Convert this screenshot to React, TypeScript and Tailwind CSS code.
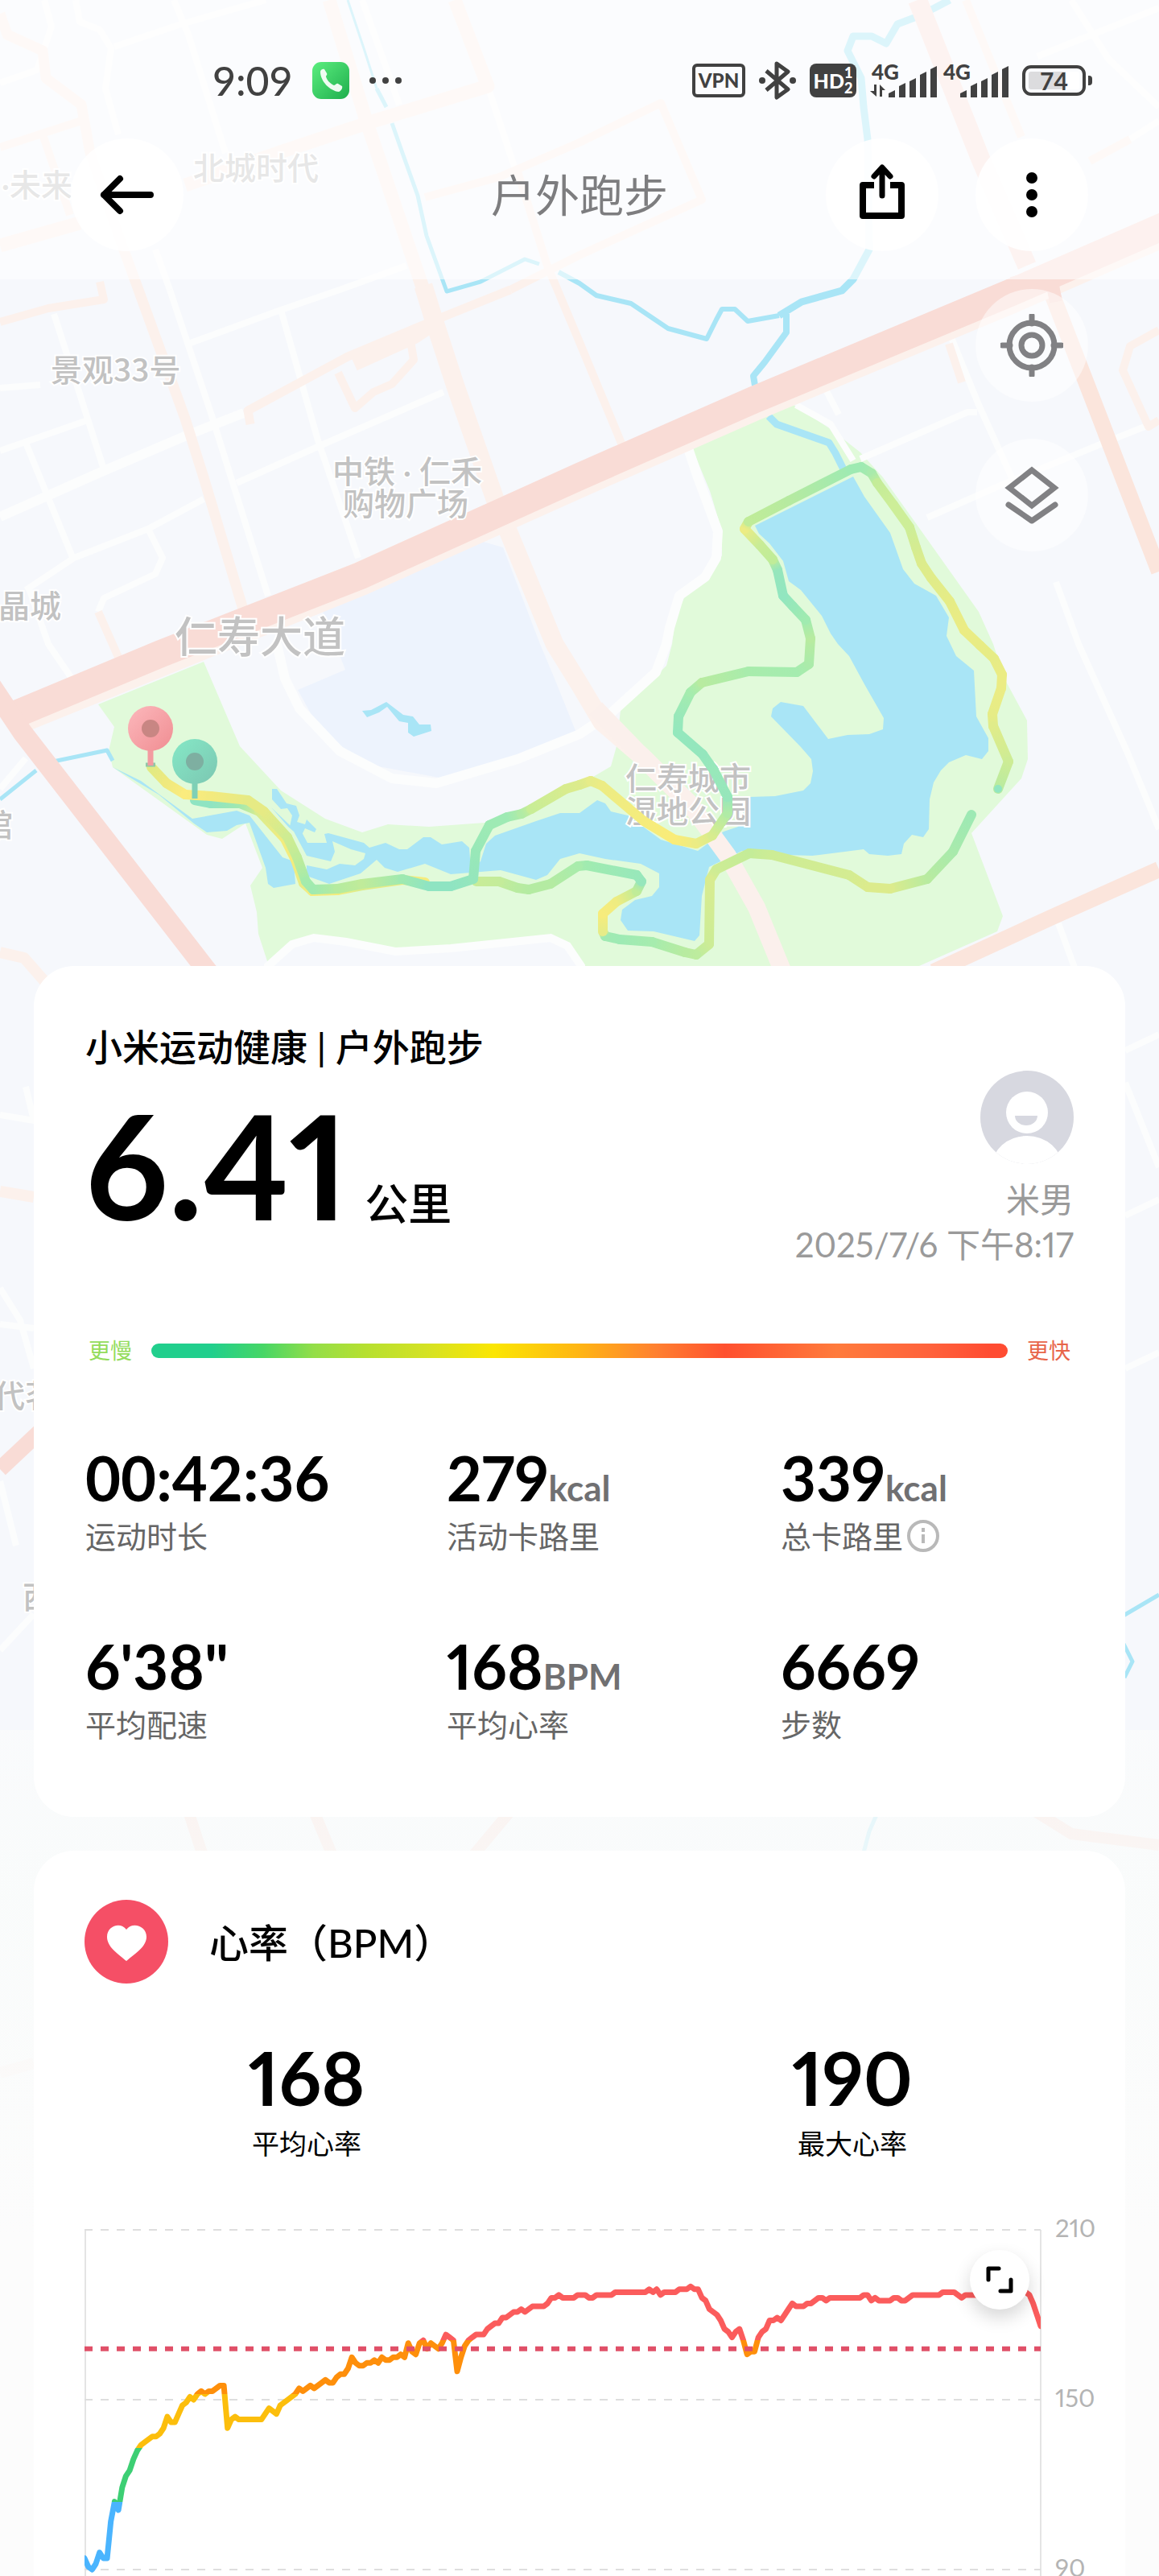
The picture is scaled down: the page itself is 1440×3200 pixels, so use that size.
import React from 'react';
import clsx from 'clsx';

interface TrackPoint {
  x: number;
  y: number;
  color: string;
}

interface StatProps {
  value: string;
  unit?: string;
  label: string;
  info?: boolean;
  clock?: boolean;
}

// one sample every 10 seconds
const heartRate = [
  94, 91, 90, 92, 96, 94, 94, 107, 114, 111, 119, 123, 125, 129, 132, 134, 135, 136, 137, 137,
  138, 140, 144, 142, 142, 145, 148, 149, 151, 150, 152, 153, 152, 153, 153, 154, 155, 155, 140, 143,
  144, 143, 143, 143, 143, 143, 143, 143, 145, 147, 146, 145, 148, 149, 150, 151, 152, 154, 153, 154,
  155, 154, 155, 156, 157, 156, 156, 158, 159, 159, 161, 165, 163, 162, 162, 163, 163, 164, 163, 165,
  164, 164, 165, 165, 166, 165, 170, 167, 166, 170, 171, 168, 170, 169, 168, 170, 173, 172, 171, 160,
  165, 169, 171, 172, 173, 173, 173, 175, 176, 177, 177, 179, 179, 180, 181, 181, 182, 181, 182, 183,
  183, 183, 183, 184, 186, 186, 187, 186, 186, 186, 186, 187, 187, 187, 186, 186, 187, 187, 187, 187,
  187, 188, 188, 188, 188, 188, 188, 188, 188, 188, 189, 188, 189, 187, 188, 188, 188, 188, 189, 189,
  189, 190, 189, 189, 186, 185, 182, 181, 180, 178, 175, 174, 172, 174, 175, 171, 166, 167, 167, 172,
  174, 175, 178, 178, 179, 178, 180, 182, 184, 183, 183, 183, 184, 184, 185, 186, 186, 185, 186, 186,
  186, 186, 186, 186, 186, 186, 186, 187, 187, 185, 186, 185, 185, 185, 185, 186, 186, 185, 185, 186,
  187, 187, 187, 187, 187, 187, 187, 187, 188, 188, 188, 188, 187, 186, 187, 187, 187, 187, 187, 187,
  187, 187, 187, 187, 187, 187, 187, 187, 187, 188, 188, 187, 184, 180, 176,
];

const toTrack = (data: string): TrackPoint[] =>
  data.trim().split(/\s+/).map((item) => {
    const [x, y, color] = item.split(',');
    return { x: Number(x), y: Number(y), color: `#${color}` };
  });

const trackUnder = toTrack(`
  242,994,8fe4c2 262,998,8fe4c2 298,998,a0e8b0 322,1008,d9ec8e 354,1042,f2ec7e 367,1068,f5ec7c
  377,1097,e6ec88 388,1107,f5ec7c 419,1106,f5ec7c 450,1100,d9ec8e 500,1093,f5ec7c 528,1096,f5ec7c
`);

const trackLower = toTrack(`
  1207,1012,9de9b4 1184,1058,a8eaac 1152,1092,b8eba0 1106,1104,dceb8c 1078,1102,dceb8c
  1055,1087,d4ec92 959,1062,cdec95 931,1060,c4ec98 890,1080,cdec95 882,1093,d8ec90
  881,1173,ccec96 865,1186,bdec9e 851,1183,b8eba0 810,1170,a6ecae 770,1167,9eeab4
  752,1163,a0eab2 749,1157,e6ec88 749,1135,f7ec7c 766,1120,efec80 791,1107,c0ec98
  797,1095,96e6bc 791,1087,98e8ba 729,1075,a0ebb0 718,1076,a8ecac 684,1098,b4eba2
  657,1105,b4eba2 643,1103,b8eba0 620,1095,c4ec9a 592,1095,c8ec98
`);

const trackMain = toTrack(`
  188,953,e0ea84 207,973,efe97e 230,987,fbec7e 262,989,f3ea7e 308,994,e6ea84 328,1008,e6ea84
  357,1040,cfec92 369,1065,c0ec98 380,1095,a4ebac 389,1105,a0eab0 420,1104,b5eb9f 450,1098,c0eb9a
  500,1092,9fe9b0 533,1101,8fe4c2 560,1101,8fe4c2 588,1092,95e6bc 591,1057,98e8b8 608,1025,9eeab4
  630,1015,9eeab4 648,1011,b0eba6 660,1005,c8ed96 703,980,d8ec8e 720,975,dceb8c 734,970,e6ec88
  748,976,ecec84 800,1020,f5ec7c 838,1043,faec78 865,1048,ecec84 885,1038,d8ec8e 904,1010,b0eba6
  904,990,96e6bb 887,957,98e8ba 873,937,94e6bd 842,910,94e8bd 843,890,98e8ba 858,860,a5ecae
  872,848,b8eba0 930,834,a8ecac 990,835,a5ecaf 1005,825,aaebaa 1007,793,b8eba0 1001,770,a0ebb0
  985,753,98e8b8 973,740,92e6c0 966,708,96e6bc 960,695,c0ec98 944,677,c8ec96 925,657,ecec84
  930,648,c0ec98 980,622,b6eaa0 1057,583,9eeab2 1070,580,9eeab2 1083,588,a8eaac 1090,600,c4ec98
  1110,627,cdee98 1130,655,cdee98 1138,680,d4ec92 1145,700,dcec8c 1157,718,e0ec8a 1180,747,e6ec86
  1198,783,ebec84 1218,802,e8ec84 1235,818,e6ec86 1245,838,ebec84 1244,855,ebec84 1233,887,e6ec86
  1234,902,e0ec8a 1253,946,cdec95 1240,980,b8eba0
`);

// Draws a track whose colour changes from point to point with the pace
const Track: React.FC<{ id: string; points: TrackPoint[] }> = ({ id, points }) => (
  <g strokeWidth="12" strokeLinecap="round">
    {points.slice(1).map((end, i) => {
      const start = points[i];
      return (
        <g key={i}>
          <linearGradient id={`${id}-${i}`} gradientUnits="userSpaceOnUse" x1={start.x} y1={start.y} x2={end.x} y2={end.y}>
            <stop offset="0" stopColor={start.color} />
            <stop offset="1" stopColor={end.color} />
          </linearGradient>
          <path d={`M${start.x} ${start.y}L${end.x} ${end.y}`} stroke={`url(#${id}-${i})`} />
        </g>
      );
    })}
  </g>
);

const RouteMap: React.FC = () => (
  <svg viewBox="0 0 1440 3200" className="absolute inset-x-0 top-0 w-full" fill="none" aria-hidden="true">
    <defs>
      <linearGradient id="pin-end" x1="0" y1="0" x2="1" y2="1">
        <stop offset="0" stopColor="#fcb8bc" />
        <stop offset="1" stopColor="#f08d92" />
      </linearGradient>
      <linearGradient id="pin-start" x1="0" y1="0" x2="1" y2="1">
        <stop offset="0" stopColor="#85e8c6" />
        <stop offset="1" stopColor="#7cc7b2" />
      </linearGradient>
      <linearGradient id="page-fade" x1="0" y1="0" x2="0" y2="1">
        <stop offset="0" stopColor="#fbfcfc" stopOpacity=".65" />
        <stop offset=".2" stopColor="#fafcfb" stopOpacity=".85" />
        <stop offset=".6" stopColor="#fcfcfc" />
      </linearGradient>
    </defs>
    <rect width="1440" height="3200" fill="#f6f8fc" />

    {/* Residential block */}
    <path d="M597 672 400 757l29 75-59 25 29 53 60 40 92 17 60-14 105-43-27-67-18-43-46-120z" fill="#edf3fd" />

    {/* Park */}
    <path
      d="M860 557 904 533 940 520 986 503 1032 533 1069 562 1097 593 1145 660 1216 760 1234 800 1248 843 1276 895 1277 943 1269 967 1207 1035 1246 1138 1239 1157 1142 1200 1142 1230 333 1230 333 1197 321 1160 319 1133 311 1100 326 1078 305 1023 276 1042 257 1037 140 953 135 933 142 903 122 875 253 822 298 927 349 982 404 1017 450 1034 482 1024 533 1027 602 1022 666 1003 703 980 720 975 759 952 766 927 771 882 828 827 835 800 839 770 851 740 881 720 897 690 897 660 882 610z"
      fill="#e1fada"
    />
    <path d="M333 1230V1200L363 1173 390 1165 430 1170 491 1182 560 1178 684 1165 705 1175 722 1200V1230z" fill="#f6f8fc" stroke="#fcfdfd" strokeWidth="10" />

    {/* Water */}
    <g fill="#a9e5f6">
      <path d="M938 653 1060 592 1074 617 1106 662 1122 707 1136 725 1163 740 1179 767 1176 790 1188 815 1210 833 1213 890 1228 917 1228 933 1220 943 1200 938 1179 947 1169 957 1160 972 1155 993 1154 1030 1147 1040 1133 1037 1123 1048 1120 1061 1103 1063 1080 1061 1073 1055 1009 1063 977 1062 922 1057 881 1077 872 1113 869 1162 863 1169 812 1157 780 1156 771 1143 773 1130 789 1118 810 1113 819 1102 819 1085 796 1073 752 1067 720 1060 696 1067 680 1087 666 1093 622 1081 560 1086 528 1073 494 1083 478 1078 468 1068 448 1085 409 1098 381 1088 381 1075 406 1080 422 1073 441 1075 452 1067 454 1060 436 1055 413 1045 416 1058 411 1070 381 1063 365 1033 358 1027 337 1003 360 1025 374 1032 382 1047 406 1047 403 1036 408 1035 452 1047 459 1053 479 1047 496 1055 506 1055 526 1040 535 1040 549 1049 574 1045 583 1053 585 1080 597 1070 604 1048 615 1038 666 1020 696 1010 720 1010 742 994 752 998 759 1008 780 1013 821 1043 867 1057 899 1033 917 1027 931 990 963 989 998 982 1007 973 1010 958 1008 943 995 928 958 890 960 880 970 872 998 877 1029 918 1053 913 1080 912 1097 906 1098 892 1074 850 1055 815 1041 800 1032 787 1021 765 995 733 980 722 973 697 956 675 943 663z" />
      <path d="M140 953 175 970 239 1017 294 1007 310 1013 351 1065 365 1070 367 1098 340 1103 333 1098 330 1078 310 1022 294 1025 282 1032 257 1034 241 1023 197 987z" />
      <path d="M450 883 461 882 480 872 501 888 513 890 521 900 535 900 536 908 514 915 507 910 507 898 496 896 481 878 471 885 456 891z" />
      <path d="M338 980h6l12 18 12 3 4 12-3 8 10 3 2-6 12 12-2 4-12-5-5 10-14-12 3-14-6-9-8 1-11-12z" />
    </g>
    <g stroke="#a9e5f6" strokeLinejoin="round">
      <path d="M955 517 965 527 1030 550 1038 563 1048 583" strokeWidth="9" />
      <path d="M0 993 45 957M66 946 133 932 140 945" strokeWidth="5" />
      <path d="M432 0 452 60 468 110" strokeWidth="3" />
      <path d="M468 110 480 133M487 153 500 190 519 243 530 293 555 362 597 350 652 322 670 328" strokeWidth="5" />
      <path d="M694 338 720 352 741 367 784 377 830 408 878 421 890 397 897 384 913 384 929 399 968 392" strokeWidth="6" />
      <path d="M968 392 996 375 1046 361 1060 347 1080 310 1078 173 1073 133 1070 97 1053 63 1060 45 1083 45 1101 54 1115 30 1136 22 1161 10 1180 0" strokeWidth="9" />
      <path d="M977 390V413L950 450 936 467 938 479" strokeWidth="8" />
      <path d="M1394 2008 1440 1981M1396 2042 1407 2064 1397 2084M1091 2250 1080 2275 1072 2305M7 2862 42 2854" strokeWidth="5" />
    </g>

    {/* Side streets */}
    <g stroke="#fcfdfd" strokeWidth="8" strokeLinejoin="round">
      <path d="M67 390 96 480 129 583M0 560 106 523M32 550 92 697M32 733 92 693 184 657 253 620M184 657 202 693 193 713 129 743 122 760" />
      <path d="M0 642 124 587 234 540 303 513" strokeWidth="12" />
      <path d="M211 360 262 513 333 740M234 427 349 385 422 360 505 330M349 385 395 547 445 693M294 600 399 553 551 487M0 482 50 478" />
      <path d="M55 0 64 33 46 87 0 103M94 0 99 27 124 37 138 60 131 110 147 167M142 58 225 30 330 0M216 0 234 43 280 190M450 0 496 130M193 310 211 360M606 107 640 210" />
      <path d="M1179 412 1216 503 1257 593M1069 570 1202 512 1214 512M1152 643 1243 603 1367 552 1440 523M1312 723 1340 800 1400 933 1440 1030M1315 1147 1338 1210" />
      <path d="M1331 0 1377 73 1440 133M1289 70 1440 10M1404 173 1440 150M989 503 1032 527 1060 572M1026 484 1042 515M35 728 60 800 92 847M0 980 32 942" />
      <path d="M855 557 867 593 892 660 890 693 876 717 844 740 832 780 828 800 815 835 760 885 720 912 643 943 542 973 487 967 422 933 372 880 354 843 344 800" strokeWidth="12" />
      <path d="M0 1385 42 1392 32 1350M0 1600 25 1640 42 1700M0 1645 42 1650M0 2050 42 2005M0 1840 20 1920M1398 1305 1440 1285M1398 1345 1440 1450M1398 1510 1440 1490M1398 1700 1440 1680" />
    </g>

    {/* Secondary roads */}
    <g stroke="#fcf1ec" strokeWidth="10" strokeLinejoin="round">
      <path d="M0 17 9 43 53 63 57 97 101 130 112 190 150 300 172 360 230 520 253 593 303 760" strokeWidth="13" />
      <path d="M0 183 101 150M53 167 87 267M0 400 60 383 129 372 124 350M122 760 150 823" />
      <path d="M0 305 99 277M230 230 354 187 459 152 606 107 565 0" strokeWidth="17" />
      <path d="M643 213 680 330 720 425 773 553M528 245 620 220 720 177 821 128 872 248 720 317 634 360" />
      <path d="M634 360 542 397 432 443 308 510 311 527" strokeWidth="11" />
      <path d="M542 400 515 418 440 452" strokeWidth="18" />
      <path d="M420 463 441 507 464 487 487 477 514 447 510 423M1179 427 1195 475M1200 0 1269 170M1354 200 1404 173M1440 410 1404 430 1395 460 1427 530 1440 522" />
      <path d="M409 0 455 150 526 360" strokeWidth="17" />
      <path d="M526 355 539 397 565 477 615 620 689 800 720 850 748 897 798 940 858 1000" strokeWidth="23" />
      <path d="M0 1183 30 1190 65 1230M0 1480 42 1487" strokeWidth="14" />
    </g>
    <path d="M740 880 798 940 858 1000 904 1063 940 1127 978 1220" stroke="#fbf0ec" strokeWidth="22" />
    <path d="M1305 360 1363 510 1381 557 1440 710M1160 1207 1312 1137 1440 1080" stroke="#fbe5dc" strokeWidth="20" />
    <path d="M1140 0 1218 197 1276 330" stroke="#fbe2dc" strokeWidth="24" />

    {/* Main avenue */}
    <path d="M14 894 448 719 720 597 936 502 1257 368 1440 288" stroke="#fcf1ec" strokeWidth="42" />
    <g stroke="#f9dcd6">
      <path d="M8 892 200 812 448 715 720 592 936 497 1257 363 1450 279" strokeWidth="34" />
      <path d="M1257 352 1305 340 1312 375" strokeWidth="16" />
      <path d="M-12 850 28 910 262 1212" strokeWidth="25" />
      <path d="M0 1825 50 1778" strokeWidth="20" />
      <path d="M234 2250 252 2305M390 2250 413 2305M634 2250 588 2305M1286 2250 1331 2278 1440 2292M0 2575 42 2563" strokeWidth="14" />
    </g>

    {/* Place names */}
    <g fill="#c2c2c2" stroke="#fff" strokeWidth="4" paintOrder="stroke" fontSize="39" fontWeight="500">
      <text x="90" y="244" textAnchor="end">·未来</text>
      <text x="240" y="223">北城时代</text>
      <text x="63" y="474" fontFamily="Noto Sans CJK SC">景观33号</text>
      <text x="506" y="600" textAnchor="middle">中铁 · 仁禾</text>
      <text x="504" y="640" textAnchor="middle">购物广场</text>
      <text x="217" y="811" fontSize="53">仁寿大道</text>
      <text x="-2" y="767">晶城</text>
      <text x="16" y="1039" textAnchor="end">馆</text>
      <text x="855" y="981" textAnchor="middle">仁寿城市</text>
      <text x="855" y="1022" textAnchor="middle">湿地公园</text>
      <text x="-8" y="1748">代茗</text>
      <text x="28" y="1998">西</text>
    </g>

    <Track id="under" points={trackUnder} />
    <Track id="lower" points={trackLower} />
    <Track id="main" points={trackMain} />
    <circle cx="1240" cy="980" r="5" fill="#92e6c0" />

    {/* Finish and start pins */}
    <path d="M181 950h12" stroke="#8fc7a8" strokeWidth="5" />
    <path d="M187 930V951" stroke="#f39ba0" strokeWidth="7" />
    <circle cx="187" cy="905" r="28" fill="url(#pin-end)" />
    <circle cx="187" cy="905" r="11" fill="#c88683" />
    <path d="M242 970V992" stroke="#7fd0b6" strokeWidth="7" />
    <circle cx="242" cy="946" r="28" fill="url(#pin-start)" />
    <circle cx="242" cy="946" r="11" fill="#7eafa1" />

    <rect y="2149" width="1440" height="1051" fill="url(#page-fade)" />
  </svg>
);

const StatusBar: React.FC = () => (
  <div className="flex h-17 items-center justify-between pr-[83px] pl-[264px] text-[#414141]">
    <div className="flex items-center gap-6">
      <span className="text-[50px] leading-none font-medium">9:09</span>
      <svg viewBox="0 0 46 46" className="size-[46px]">
        <defs>
          <linearGradient id="call" x1="0" y1="0" x2="1" y2="1">
            <stop offset="0" stopColor="#5bee7f" />
            <stop offset="1" stopColor="#1fae4d" />
          </linearGradient>
        </defs>
        <rect width="46" height="46" rx="11" fill="url(#call)" />
        <path d="M10 12c0-2 3-4 5-3l3 5c1 2-1 3-1 4 1 5 6 9 10 11 2 0 3-3 5-2l5 3c1 2-1 6-4 7C22 36 10 24 10 12z" fill="#fff" fillOpacity=".92" />
      </svg>
      <svg viewBox="0 0 42 10" className="w-[42px]" fill="#414141">
        <circle cx="5" cy="5" r="4" />
        <circle cx="21" cy="5" r="4" />
        <circle cx="37" cy="5" r="4" />
      </svg>
    </div>

    <div className="flex items-center gap-[17px]">
      <span className="flex h-[42px] w-[66px] items-center justify-center rounded-md border-4 border-[#414141] text-[24px] leading-none font-black">
        VPN
      </span>
      <svg viewBox="0 0 46 48" className="w-[46px]" fill="none" stroke="#414141" strokeWidth="5" strokeLinejoin="round">
        <path d="M9 12 36 35 22 45V3L36 13 9 36" />
        <circle cx="4" cy="24" r="4" fill="#414141" stroke="none" />
        <circle cx="42" cy="24" r="4" fill="#414141" stroke="none" />
      </svg>
      <span className="flex h-[42px] w-[58px] items-center justify-center rounded-lg bg-[#414141] text-white">
        <span className="text-[25px] leading-none font-black">HD</span>
        <span className="flex flex-col text-[18px] leading-[19px] font-black">
          <span>1</span>
          <span>2</span>
        </span>
      </span>
      <svg viewBox="0 0 172 44" className="w-[172px]" fill="#414141">
        <text x="2" y="21" fontSize="26" fontWeight="900">4G</text>
        <text x="91" y="21" fontSize="26" fontWeight="900">4G</text>
        <path d="M5 27h3v15L0 35h5zM12 42V27l7 7h-4v8z" />
        <path d="M23 43v-5l8-4v9zM36 43V29l8-4v18zM49 43V23l8-4v24zM62 43V15l8-4v32zM75 43V8l8-4v39z" />
        <path d="M112 43v-5l8-4v9zM125 43V29l8-4v18zM138 43V23l8-4v24zM151 43V15l8-4v32zM164 43V8l8-4v39z" />
      </svg>
      <div className="flex items-center gap-[3px]">
        <span className="flex h-[38px] w-[79px] items-center justify-center rounded-[11px] border-4 border-[#414141] bg-linear-to-r from-[#dcdcde] from-70% to-white to-70% bg-clip-content p-1 text-[30px] leading-none font-bold">
          74
        </span>
        <span className="h-3 w-[5px] rounded-r-sm bg-[#414141]" />
      </div>
    </div>
  </div>
);

const Header: React.FC = () => (
  <header className="relative bg-white/60 pt-[66px] pb-[35px]">
    <StatusBar />
    <div className="mt-[38px] grid grid-cols-[1fr_auto_1fr] items-center px-[88px]">
      <button aria-label="返回" className="flex size-35 items-center justify-center rounded-full bg-white/90">
        <svg viewBox="0 0 68 50" className="w-[68px]" fill="none" stroke="#000" strokeWidth="8" strokeLinecap="round" strokeLinejoin="round">
          <path d="M63 25H5M25 5 5 25l20 20" />
        </svg>
      </button>
      <h1 className="text-[55px] leading-[72px] text-[#7d7d7f]">户外跑步</h1>
      <div className="flex justify-end gap-[46px]">
        <button aria-label="分享" className="flex size-35 items-center justify-center rounded-full bg-white/90">
          <svg viewBox="0 0 58 78" className="w-[58px]" fill="none" stroke="#000" strokeWidth="7">
            <path d="M19 27H5v38h48V27H39" strokeWidth="8" strokeLinejoin="round" />
            <path d="M29 40V6M19 16 29 5l10 11" strokeLinecap="round" strokeLinejoin="round" />
          </svg>
        </button>
        <button aria-label="更多" className="flex size-35 items-center justify-center rounded-full bg-white/90">
          <svg viewBox="0 0 14 58" className="w-[14px]">
            <circle cx="7" cy="8" r="7" />
            <circle cx="7" cy="29" r="7" />
            <circle cx="7" cy="50" r="7" />
          </svg>
        </button>
      </div>
    </div>
  </header>
);

const MapTools: React.FC = () => (
  <div className="relative flex h-[853px] flex-col items-end gap-[46px] px-[88px] pt-3">
    <button aria-label="定位" className="flex size-35 items-center justify-center rounded-full bg-white/50">
      <svg viewBox="0 0 78 78" className="w-[78px]" fill="none" stroke="#818184" strokeWidth="7">
        <circle cx="39" cy="39" r="28" />
        <circle cx="39" cy="39" r="13" />
        <path d="M39 2v10M39 66v10M2 39h10M66 39h10" strokeLinecap="round" />
      </svg>
    </button>
    <button aria-label="图层" className="flex size-35 items-center justify-center rounded-full bg-white/50">
      <svg viewBox="0 0 68 74" className="w-[68px]" fill="none" stroke="#818184" strokeWidth="7">
        <path d="M34 6 62 28 34 50 6 28z" />
        <path d="M5 49 34 69 63 49" strokeLinecap="round" strokeLinejoin="round" />
      </svg>
    </button>
  </div>
);

const Stat: React.FC<StatProps> = ({ value, unit, label, info, clock }) => (
  <div>
    <p className={clsx('text-[76px] leading-[80px] font-bold', !clock && 'proportional-nums')}>
      {value}
      {unit && <span className="text-[44px] leading-none font-bold text-[#707072]">{unit}</span>}
    </p>
    <p className="mt-2 flex items-center gap-1 text-[38px] leading-[48px] text-[#666]">
      {label}
      {info && (
        <svg viewBox="0 0 42 42" className="w-[42px]" fill="none" stroke="#b9b9b9" strokeWidth="4">
          <circle cx="21" cy="21" r="18" />
          <path d="M21 19v11M21 11v5" />
        </svg>
      )}
    </p>
  </div>
);

const SummaryCard: React.FC = () => (
  <section className="rounded-[50px] bg-white px-16 pt-[72px] pb-[91px]">
    <h2 className="text-[46px] leading-[58px] font-medium">小米运动健康 | 户外跑步</h2>

    <div className="flex justify-between">
      <p className="mt-[26px] text-[180px] leading-[180px] font-bold proportional-nums">
        6.41
        <span className="ml-5 text-[54px] leading-none font-medium">公里</span>
      </p>
      <div className="flex flex-col items-end text-[42px] leading-[56px] text-[#9a9a9a] proportional-nums">
        <svg viewBox="0 0 116 116" className="mb-4 w-[116px]">
          <clipPath id="avatar">
            <circle cx="58" cy="58" r="58" />
          </clipPath>
          <g clipPath="url(#avatar)">
            <rect width="116" height="116" fill="#d7d8e0" />
            <circle cx="58" cy="52" r="26" fill="#fff" />
            <path d="M43 56h28a14 12 0 0 1-28 0z" fill="#d7d8e0" />
            <ellipse cx="58" cy="120" rx="44" ry="39" fill="#fff" />
          </g>
        </svg>
        <p>米男</p>
        <p>2025/7/6 下午8:17</p>
      </div>
    </div>

    <div className="mt-[84px] flex items-center gap-6 px-1 text-[27px] leading-[40px]">
      <span className="text-[#94dc5c]">更慢</span>
      <div className="h-[18px] flex-1 rounded-full bg-[linear-gradient(90deg,#21cf8d_7%,#46d666_13%,#94de48_19%,#b6e030_25%,#d4e224_32%,#fbe603_40%,#ffb514_50%,#ff8030_59%,#ff502f_67%,#ff7b3c_80%,#ff623c_91%,#ff4c32_98%)]" />
      <span className="text-[#e8654a]">更快</span>
    </div>

    <div className="mt-[98px] grid grid-cols-[449fr_415fr_364fr] gap-y-[98px]">
      <Stat value="00:42:36" label="运动时长" clock />
      <Stat value="279" unit="kcal" label="活动卡路里" />
      <Stat value="339" unit="kcal" label="总卡路里" info />
      <Stat value={'6\'38"'} label="平均配速" />
      <Stat value="168" unit="BPM" label="平均心率" />
      <Stat value="6669" label="步数" />
    </div>
  </section>
);

const PLOT_WIDTH = 1188;
const chartY = (bpm: number) => 20 + ((210 - bpm) * 211) / 60;

const HeartRateChart: React.FC = () => {
  const step = PLOT_WIDTH / (heartRate.length - 1);
  const points = heartRate.map((bpm, i) => `${(i * step).toFixed(1)},${chartY(bpm).toFixed(1)}`).join(' ');

  return (
    <div className="relative ml-[63px]">
      <svg viewBox="0 0 1293 720" className="w-full" fill="none" role="img" aria-label="心率曲线">
        <defs>
          {/* Heart rate zones, top to bottom */}
          <linearGradient id="zones" gradientUnits="userSpaceOnUse" x1="0" y1="0" x2="0" y2="500">
            <stop offset="31.4%" stopColor="#fb5c5c" />
            <stop offset="31.4%" stopColor="#fe8f0b" />
            <stop offset="44.8%" stopColor="#fe8f0b" />
            <stop offset="44.8%" stopColor="#fcbe0c" />
            <stop offset="58.2%" stopColor="#fcbe0c" />
            <stop offset="58.2%" stopColor="#3dcf74" />
            <stop offset="71.6%" stopColor="#3dcf74" />
            <stop offset="71.6%" stopColor="#4ab4fe" />
          </linearGradient>
          <clipPath id="plot">
            <rect width={PLOT_WIDTH} height="720" />
          </clipPath>
        </defs>
        <path d={`M1 20V720M${PLOT_WIDTH} 20V720`} stroke="#e4e4e4" strokeWidth="2" />
        {[210, 150, 90].map((bpm) => (
          <g key={bpm}>
            <path d={`M0 ${chartY(bpm)}H${PLOT_WIDTH}`} stroke="#dedede" strokeWidth="2" strokeDasharray="10 10" />
            <text x="1206" y={chartY(bpm) + 9} fontSize="31" fill="#b4b4b4" className="proportional-nums">{bpm}</text>
          </g>
        ))}
        <g clipPath="url(#plot)">
          <polyline points={points} stroke="url(#zones)" strokeWidth="7" strokeLinecap="round" strokeLinejoin="round" />
        </g>
        <path d={`M0 ${chartY(168)}H${PLOT_WIDTH}`} stroke="#e05068" strokeWidth="6" strokeDasharray="10 10" />
      </svg>
      <button
        aria-label="全屏"
        className="absolute top-[45px] right-[119px] flex size-[74px] items-center justify-center rounded-full bg-white shadow-[0_10px_22px_rgba(0,0,0,0.16)]"
      >
        <svg viewBox="0 0 34 34" className="w-[34px]" fill="none" stroke="#000" strokeWidth="5" strokeLinecap="round" strokeLinejoin="round">
          <path d="M3 17V3h13M31 17v14H18" />
        </svg>
      </button>
    </div>
  );
};

const HeartRateCard: React.FC = () => (
  <section className="mt-[42px] rounded-t-[50px] bg-white pt-[61px]">
    <div className="flex items-center gap-[50px] px-[63px]">
      <svg viewBox="0 0 105 105" className="w-[105px]">
        <circle cx="52" cy="52" r="52" fill="#f54f66" />
        <path d="M52 76C40 66 28 58 28 46c0-14 17-19 24-9 7-10 25-5 25 9 0 12-13 20-25 30z" fill="#fff" />
      </svg>
      <h2 className="text-[49px] leading-[64px] font-medium">心率（BPM）</h2>
    </div>
    <div className="mt-[70px] grid grid-cols-2 text-center">
      <div>
        <p className="text-[92px] leading-[92px] font-bold proportional-nums">168</p>
        <p className="mt-3 text-[34px] leading-[48px]">平均心率</p>
      </div>
      <div>
        <p className="text-[92px] leading-[92px] font-bold proportional-nums">190</p>
        <p className="mt-3 text-[34px] leading-[48px]">最大心率</p>
      </div>
    </div>
    <div className="mt-[63px]">
      <HeartRateChart />
    </div>
  </section>
);

const App: React.FC = () => {
  return (
    <div className="relative h-screen overflow-hidden bg-[#fcfcfc] font-[Lato,'Noto_Sans_CJK_SC',sans-serif] text-black">
      <RouteMap />
      <Header />
      <MapTools />
      <main className="relative px-[42px]">
        <SummaryCard />
        <HeartRateCard />
      </main>
    </div>
  );
};

export default App;
